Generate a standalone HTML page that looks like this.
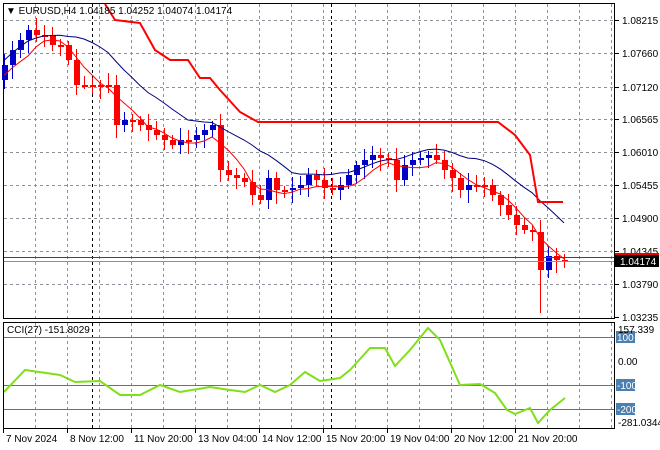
<!DOCTYPE html>
<html><head><meta charset="utf-8"><style>
body{margin:0;background:#fff;width:660px;height:450px;overflow:hidden}
svg{display:block;font-family:"Liberation Sans",sans-serif;font-size:10px}
</style></head><body>
<svg id="s" width="660" height="450" xmlns="http://www.w3.org/2000/svg">
<rect width="660" height="450" fill="#fff"/>
<g id="grid" stroke="#8a939c" stroke-dasharray="3,3" stroke-width="1"></g>
<g id="cand"></g>
<g id="ind" fill="none"></g>
<rect x="3.5" y="3.5" width="611" height="315" fill="none" stroke="#000"/>
<rect x="3.5" y="322.5" width="611" height="106" fill="none" stroke="#000"/>
<g id="lab" fill="#000"></g>
<text x="6" y="14" font-size="10">▼ EURUSD,H4  1.04185 1.04252 1.04074 1.04174</text>
<text x="7" y="333" font-size="10">CCI(27) -151.8029</text>
</svg>
<script>
var NS="http://www.w3.org/2000/svg";
function el(p,t,a,txt){var e=document.createElementNS(NS,t);for(var k in a)e.setAttribute(k,a[k]);if(txt!=null)e.textContent=txt;document.getElementById(p).appendChild(e);return e;}
for(var x=35;x<615;x+=32){el("grid","line",{x1:x+.5,y1:4,x2:x+.5,y2:318});el("grid","line",{x1:x+.5,y1:323,x2:x+.5,y2:428});}
[92,331].forEach(function(x){el("grid","line",{x1:x+.5,y1:4,x2:x+.5,y2:318,stroke:"#000"});el("grid","line",{x1:x+.5,y1:323,x2:x+.5,y2:428,stroke:"#000"});});
var py=[20,53,87,119,152,185,218,251,284,317],pl=["1.08215","1.07660","1.07120","1.06565","1.06010","1.05455","1.04900","1.04345","1.03790","1.03235"];
for(var i=0;i<py.length;i++){if(i<9)el("grid","line",{x1:4,y1:py[i]+.5,x2:614,y2:py[i]+.5});el("lab","line",{x1:615,y1:py[i]+.5,x2:619,y2:py[i]+.5,stroke:"#000"});el("lab","text",{x:622,y:py[i]+4},pl[i]);}
el("lab","line",{x1:4,y1:257.5,x2:614,y2:257.5,stroke:"#e00"});
el("lab","line",{x1:4,y1:261.5,x2:614,y2:261.5,stroke:"#8a939c"});
el("lab","rect",{x:615,y:253,width:44,height:5,fill:"#e00"});
el("lab","rect",{x:615,y:255,width:44,height:12,fill:"#000"});
el("lab","text",{x:620,y:265,fill:"#fff"},"1.04174");
var c=[80,65,50,40,30,35,35,45,45,60,85,85,85,85,85,125,120,120,125,130,135,140,145,140,140,135,130,125,170,175,178,182,195,200,178,190,190,188,185,175,180,188,190,185,175,165,160,155,158,160,180,165,160,158,155,160,170,178,190,185,185,185,195,205,215,225,230,232,270,256,260,261];
var n=c.length,x0=564-8*(n-2);
for(var i=1;i<n;i++){var x=x0+8*(i-1),o=c[i-1],cl=c[i];var up=cl<o,col=up?"#0000c8":"#f00";
var hi=Math.min(o,cl)-4-(i*7%9),lo=Math.max(o,cl)+4+(i*5%11);
if(i==n-4){lo=313;}
el("cand","line",{x1:x+.5,y1:hi,x2:x+.5,y2:lo,stroke:col});
var t=Math.min(o,cl),h=Math.max(2,Math.abs(o-cl));
el("cand","rect",{x:x-2,y:t,width:6,height:h,fill:col});}
function ma(p,off){var s="";for(var i=0;i<n;i++){var a=0,k=0;for(var j=Math.max(0,i-p+1);j<=i;j++){a+=c[j];k++;}var x=x0+8*(i-1);if(x<4)continue;s+=(s?"L":"M")+x+","+(a/k-off).toFixed(1);}return s;}
el("ind","path",{d:ma(10,12),stroke:"#000080","stroke-width":1});
el("ind","path",{d:ma(5,-3),stroke:"#f00","stroke-width":1});
el("ind","path",{d:"M105,4L115,20L140,23L155,50L170,60L188,60L200,78L210,78L220,90L240,112L258,122L498,122L515,135L530,155L538,202L563,202",stroke:"#f00","stroke-width":2});
[[337,"100"],[385,"-100"],[409,"-200"]].forEach(function(l){el("ind","line",{x1:4,y1:l[0]+.5,x2:614,y2:l[0]+.5,stroke:"#4a78a8"});el("lab","rect",{x:616,y:l[0]-6,width:19,height:12,fill:"#4a7fb0"});el("lab","text",{x:617,y:l[0]+4,fill:"#fff"},l[1]);});
el("lab","text",{x:618,y:333},"157.339");
el("lab","text",{x:618,y:365},"0.00");
el("lab","text",{x:618,y:426},"-281.0344");
el("ind","path",{d:"M4,392L25,370L60,375L75,382L100,381L120,395L140,395L160,385L180,392L210,387L230,390L245,392L260,385L275,392L290,385L305,372L320,381L340,378L350,370L370,348L385,348L395,366L410,350L428,328L440,340L460,385L480,384L495,393L507,410L515,414L530,408L538,423L550,410L565,398",stroke:"#7fe01a","stroke-width":2});
var tl=[[3,"7 Nov 2024"],[67,"8 Nov 12:00"],[131,"11 Nov 20:00"],[195,"13 Nov 04:00"],[259,"14 Nov 12:00"],[323,"15 Nov 20:00"],[387,"19 Nov 04:00"],[451,"20 Nov 12:00"],[515,"21 Nov 20:00"]];
tl.forEach(function(t){el("lab","line",{x1:t[0]+.5,y1:429,x2:t[0]+.5,y2:433,stroke:"#000"});el("lab","text",{x:t[0]+3,y:442},t[1]);});
</script>
</body></html>
